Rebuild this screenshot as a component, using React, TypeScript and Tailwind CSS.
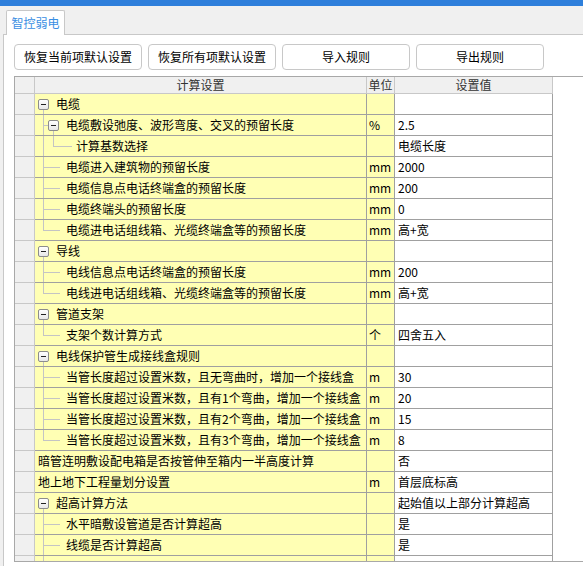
import React from "react";

type Row = {
  kind: "l0box" | "l0plain" | "l1box" | "l1leaf" | "l2leaf" | "blank";
  name: string;
  unit?: string;
  value?: string;
  last?: boolean;
  l1Last?: boolean;
  l0Continues?: boolean;
};

const rows: Row[] = [
  { kind: "l0box", name: "电缆" },
  { kind: "l1box", name: "电缆敷设弛度、波形弯度、交叉的预留长度", unit: "%", value: "2.5" },
  { kind: "l2leaf", name: "计算基数选择", value: "电缆长度", l1Last: true, l0Continues: true },
  { kind: "l1leaf", name: "电缆进入建筑物的预留长度", unit: "mm", value: "2000" },
  { kind: "l1leaf", name: "电缆信息点电话终端盒的预留长度", unit: "mm", value: "200" },
  { kind: "l1leaf", name: "电缆终端头的预留长度", unit: "mm", value: "0" },
  { kind: "l1leaf", name: "电缆进电话组线箱、光缆终端盒等的预留长度", unit: "mm", value: "高+宽", last: true },
  { kind: "l0box", name: "导线" },
  { kind: "l1leaf", name: "电线信息点电话终端盒的预留长度", unit: "mm", value: "200" },
  { kind: "l1leaf", name: "电线进电话组线箱、光缆终端盒等的预留长度", unit: "mm", value: "高+宽", last: true },
  { kind: "l0box", name: "管道支架" },
  { kind: "l1leaf", name: "支架个数计算方式", unit: "个", value: "四舍五入", last: true },
  { kind: "l0box", name: "电线保护管生成接线盒规则" },
  { kind: "l1leaf", name: "当管长度超过设置米数，且无弯曲时，增加一个接线盒", unit: "m", value: "30" },
  { kind: "l1leaf", name: "当管长度超过设置米数，且有1个弯曲，增加一个接线盒", unit: "m", value: "20" },
  { kind: "l1leaf", name: "当管长度超过设置米数，且有2个弯曲，增加一个接线盒", unit: "m", value: "15" },
  { kind: "l1leaf", name: "当管长度超过设置米数，且有3个弯曲，增加一个接线盒", unit: "m", value: "8", last: true },
  { kind: "l0plain", name: "暗管连明敷设配电箱是否按管伸至箱内一半高度计算", value: "否" },
  { kind: "l0plain", name: "地上地下工程量划分设置", unit: "m", value: "首层底标高" },
  { kind: "l0box", name: "超高计算方法", value: "起始值以上部分计算超高" },
  { kind: "l1leaf", name: "水平暗敷设管道是否计算超高", value: "是" },
  { kind: "l1leaf", name: "线缆是否计算超高", value: "是" },
  { kind: "blank", name: "" },
];

function MinusBox({ left }: { left: string }) {
  return (
    <div
      className={`absolute top-[5px] ${left} w-[11px] h-[11px] rounded-[2px] border border-[#8c8c8c] bg-gradient-to-b from-white to-[#e8e8e8] flex items-center justify-center`}
    >
      <div className="w-[5px] h-[1px] bg-[#222]" />
    </div>
  );
}

function TreeCell({ r }: { r: Row }) {
  const line = "absolute bg-[#c4c4c4]";
  if (r.kind === "blank") {
    return <div className={`${line} left-[8px] top-0 bottom-[-1px] w-[1px]`} />;
  }
  if (r.kind === "l0plain") {
    return <span className="pl-[3px]">{r.name}</span>;
  }
  if (r.kind === "l0box") {
    return (
      <>
        <MinusBox left="left-[3px]" />
        <div className={`${line} left-[8px] top-[16px] bottom-[-1px] w-[1px]`} />
        <span className="pl-[21px]">{r.name}</span>
      </>
    );
  }
  if (r.kind === "l1box") {
    return (
      <>
        <div className={`${line} left-[8px] top-0 bottom-[-1px] w-[1px]`} />
        <div className={`${line} left-[8px] top-[10px] w-[5px] h-[1px]`} />
        <MinusBox left="left-[13px]" />
        <div className={`${line} left-[18px] top-[16px] bottom-[-1px] w-[1px]`} />
        <span className="pl-[31px]">{r.name}</span>
      </>
    );
  }
  if (r.kind === "l2leaf") {
    return (
      <>
        {r.l0Continues && <div className={`${line} left-[8px] top-0 bottom-[-1px] w-[1px]`} />}
        <div
          className={`${line} left-[18px] top-0 w-[1px] ${r.l1Last ? "h-[11px]" : "bottom-[-1px]"}`}
        />
        <div className={`${line} left-[18px] top-[10px] w-[19px] h-[1px]`} />
        <span className="pl-[41px]">{r.name}</span>
      </>
    );
  }
  return (
    <>
      <div className={`${line} left-[8px] top-0 w-[1px] ${r.last ? "h-[11px]" : "bottom-[-1px]"}`} />
      <div className={`${line} left-[8px] top-[10px] w-[17px] h-[1px]`} />
      <span className="pl-[31px]">{r.name}</span>
    </>
  );
}

export default function App() {
  return (
    <div
      className="w-[583px] h-[566px] bg-[#f0f0f0] overflow-hidden flex flex-col text-[12px] text-black"
      style={{ fontFamily: '"Noto Sans CJK SC", "Microsoft YaHei", sans-serif' }}
    >
      <div className="h-[6px] bg-[#2e7fdb] shrink-0" />
      <div className="h-[28px] shrink-0 flex items-end pl-[6px]">
        <div className="relative z-10 w-[59px] h-[25px] bg-white border border-b-0 border-[#c8c8c8] rounded-t-[2px] flex items-center justify-center text-[#3a8ee3] mb-[-1px]">
          智控弱电
        </div>
      </div>
      <div className="flex-1 ml-[3px] bg-white border-t border-l border-[#c8c8c8] flex flex-col">
        <div className="flex gap-[6px] pl-[10px] pt-[9px] h-[41px] shrink-0">
          {["恢复当前项默认设置", "恢复所有项默认设置", "导入规则", "导出规则"].map((t) => (
            <div
              key={t}
              className="w-[128px] h-[26px] border border-[#c8c8c8] rounded-[4px] bg-white flex items-center justify-center"
            >
              {t}
            </div>
          ))}
        </div>
        <div className="ml-[10px] h-[486px] border-t border-b border-l border-[#a8a8a8] overflow-hidden">
          <div className="flex h-[17px] leading-[16px] text-[#333]">
            <div className="w-[20px] h-[17px] bg-[#f0f0f0] border-r border-b border-[#c8c8c8]" />
            <div className="w-[332px] h-[17px] bg-[#f0f0f0] border-r border-b border-[#c8c8c8] text-center">计算设置</div>
            <div className="w-[28px] h-[17px] bg-[#f0f0f0] border-r border-b border-[#c8c8c8] text-center">单位</div>
            <div className="w-[158px] h-[17px] bg-[#f0f0f0] border-r border-b border-[#c8c8c8] text-center">设置值</div>
          </div>
          {rows.map((r, i) => (
            <div key={i} className="flex h-[21px] leading-[20px]">
              <div className="w-[20px] h-[21px] bg-[#f0f0f0] border-r border-b border-[#c8c8c8]" />
              <div className="relative w-[332px] h-[21px] bg-[#ffffb4] border-r border-b border-[#a0a0a0] whitespace-nowrap overflow-hidden">
                <TreeCell r={r} />
              </div>
              <div className="w-[28px] h-[21px] bg-[#ffffb4] border-r border-b border-[#a0a0a0] pl-[2px]">
                {r.unit}
              </div>
              <div className="w-[158px] h-[21px] bg-white border-r border-b border-[#a0a0a0] pl-[3px] whitespace-nowrap overflow-hidden">
                {r.value}
              </div>
            </div>
          ))}
        </div>
      </div>
    </div>
  );
}
